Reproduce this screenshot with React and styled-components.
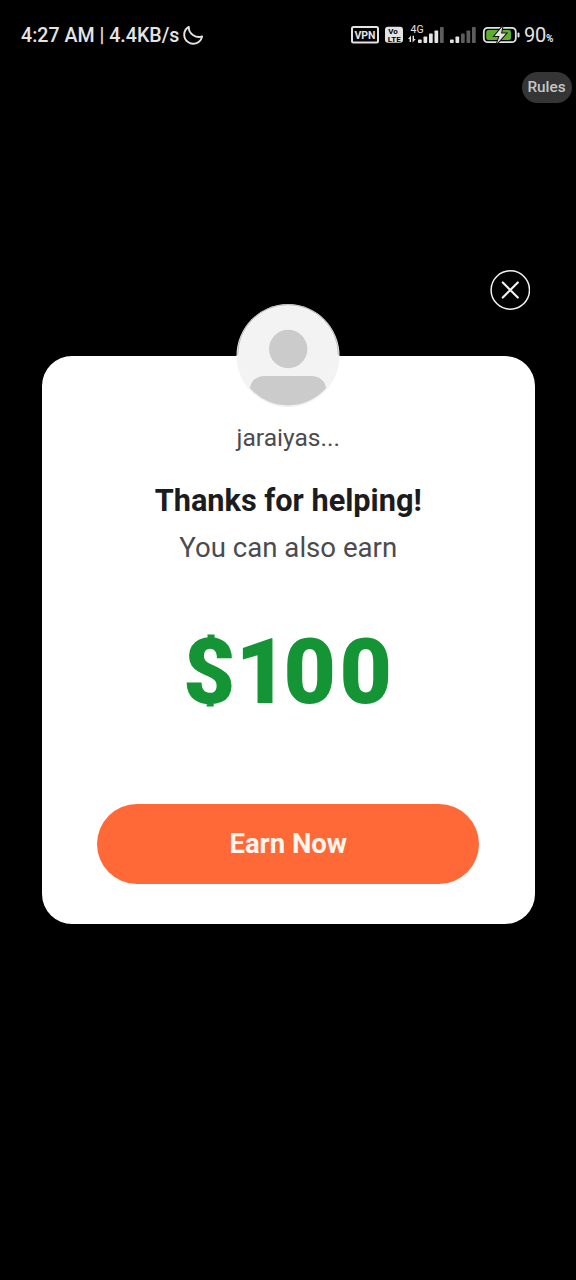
import styled, { createGlobalStyle } from 'styled-components';

const GlobalStyle = createGlobalStyle`
  body {
    margin: 0;
    background: #000;
    font-family: Roboto, sans-serif;
  }
  * {
    box-sizing: border-box;
  }
`;

const Screen = styled.main`
  display: flex;
  flex-direction: column;
  width: 576px;
  height: 1280px;
  overflow: hidden;
  background: #000;
`;

const StatusBar = styled.header`
  display: flex;
  justify-content: space-between;
  height: 72px;
  padding: 24px 20px 0 21px;
  color: #e4e4e4;
`;

const StatusGroup = styled.div`
  display: flex;
  height: 22px;
  align-items: center;
`;

const Clock = styled.span`
  margin-right: 4px;
  padding-top: 1px;
  font-size: 19.6px;
  font-weight: 500;
  line-height: 22px;
`;

const StatusIcons = styled.svg`
  display: block;
  width: 173px;
  height: 24px;
  font-family: Roboto, sans-serif;
`;

const Percent = styled.span`
  width: 32px;
  padding-top: 3px;
  font-size: 20px;
  line-height: 22px;
  letter-spacing: -0.2px;
  white-space: nowrap;
  small {
    font-size: 10px;
    font-weight: 700;
  }
`;

const RulesButton = styled.button`
  align-self: flex-end;
  width: 50px;
  height: 31px;
  margin-right: 4px;
  padding: 0;
  border: 0;
  border-radius: 16px;
  background: #353535;
  color: #c6c6c6;
  font: 500 15.3px/31px Roboto, sans-serif;
  span {
    display: block;
    height: 31px;
    padding-right: 1px;
  }
`;

const CloseButton = styled.button`
  align-self: flex-end;
  width: 40px;
  height: 40px;
  margin: 167px 46px 0 0;
  padding: 0;
  border: 0;
  background: none;
  svg {
    display: block;
  }
`;

const Card = styled.section`
  display: flex;
  flex-direction: column;
  align-items: center;
  width: 493.5px;
  height: 568px;
  margin: 46.4px 0 0 41.5px;
  border-radius: 30px;
  background: #fff;
`;

const Avatar = styled.svg`
  display: block;
  flex: none;
  width: 104px;
  height: 104px;
  margin-top: -52.4px;
`;

const Text = styled.p`
  margin: ${({ $top }) => $top}px 0 0;
  color: ${({ $color }) => $color};
  font-size: ${({ $size }) => $size}px;
  font-weight: ${({ $weight }) => $weight || 400};
  line-height: ${({ $line }) => $line}px;
  white-space: nowrap;
`;

// keeps the strokes above and below the dollar sign short
const Currency = styled.span`
  display: inline-block;
  clip-path: inset(16.5px 0 19.5px 0);
`;

const Digit = styled.span`
  letter-spacing: ${({ $spacing }) => $spacing}px;
`;

const EarnButton = styled.button`
  width: 382px;
  height: 80px;
  margin-top: 78px;
  padding: 0;
  border: 0;
  border-radius: 40px;
  background: #ff6937;
  color: #fff5ee;
  font: 700 27.5px/80px Roboto, sans-serif;
`;

const SignalBars = ({ x, active }) => (
  <g transform={`translate(${x} 0)`}>
    {[3.5, 6.5, 9.5, 12.5, 16].map((height, index) => (
      <rect
        key={height}
        x={index * 5.5}
        y={20 - height}
        width="3.7"
        height={height}
        rx="0.8"
        fill={index < active ? '#e4e4e4' : '#5d5d5d'}
      />
    ))}
  </g>
);

const App = () => (
  <>
    <GlobalStyle />
    <Screen>
      <StatusBar>
        <StatusGroup>
          <Clock>4:27 AM | 4.4KB/s</Clock>
          <svg width="20" height="20" viewBox="0 0 20 20" fill="none">
            <path d="M7 1.4A9 9 0 1 0 18.8 12.6C13 14.2 5.6 8.5 7 1.4Z" stroke="#e4e4e4" strokeWidth="1.9" strokeLinejoin="round" transform="rotate(-8 10 10)" />
          </svg>
        </StatusGroup>
        <StatusGroup>
          <StatusIcons viewBox="0 0 173 24" fill="#e4e4e4">
            <rect x="1" y="4" width="26" height="15.5" rx="1.5" fill="none" stroke="#e4e4e4" strokeWidth="2" />
            <text x="14" y="15.6" fontSize="10.5" fontWeight="700" textAnchor="middle">VPN</text>
            <rect x="34" y="3.8" width="18" height="16" rx="3" />
            <text x="42" y="11.3" fontSize="8" fontWeight="700" textAnchor="middle" fill="#000">Vo</text>
            <text x="43.2" y="18.6" fontSize="8" fontWeight="700" textAnchor="middle" fill="#000">LTE</text>
            <text x="59.5" y="9.5" fontSize="10.5">4G</text>
            <path d="M58.6 19v-3h-1.6l3-3.6v6.6zM61.6 12.8h1.4v3.2h1.8l-3.2 3.6z" />
            <SignalBars x={67} active={4} />
            <SignalBars x={99} active={2} />
            <rect x="132.8" y="4.8" width="32" height="14.4" rx="4" fill="none" stroke="#e4e4e4" strokeWidth="1.8" />
            <rect x="135.2" y="7" width="24.8" height="10" rx="2" fill="#5dae2b" />
            <rect x="166.5" y="9.5" width="2" height="5" rx="1" />
            <path d="M151.5 3.5L143.5 13h5l-2.5 7.5 9-10h-5z" stroke="#111" strokeWidth="2" paintOrder="stroke" />
          </StatusIcons>
          <Percent>
            90
            <small>%</small>
          </Percent>
        </StatusGroup>
      </StatusBar>
      <RulesButton><span>Rules</span></RulesButton>
      <CloseButton aria-label="Close">
        <svg width="40" height="40" viewBox="0 0 40 40" fill="none" stroke="#f2f2f2">
          <circle cx="20.3" cy="20" r="19.2" strokeWidth="1.5" />
          <path d="M12.8 12.5l15 15M27.8 12.5l-15 15" strokeWidth="2.2" strokeLinecap="round" />
        </svg>
      </CloseButton>
      <Card>
        <Avatar viewBox="0 0 104 104">
          <defs>
            <clipPath id="avatar-clip">
              <circle cx="52" cy="50.8" r="50.6" />
            </clipPath>
          </defs>
          <circle cx="52" cy="51.6" r="51.5" fill="#f3f3f3" />
          <path d="M1.6 51a50.4 50.4 0 0 1 100.8 0" fill="none" stroke="#a2a2a2" strokeWidth="0.7" />
          <g clipPath="url(#avatar-clip)" fill="#cbcbcb">
            <circle cx="52.2" cy="45" r="19.2" />
            <path d="M28 72h48q7 0 12 6l2 5v20H14V83l2-5q5-6 12-6z" />
          </g>
        </Avatar>
        <Text $top={16} $size={24.6} $line={28} $color="#4b4b4f">jaraiyas...</Text>
        <Text $top={31} $size={30.7} $line={36} $weight={700} $color="#1c1c1f">Thanks for helping!</Text>
        <Text $top={13} $size={27.6} $line={32} $color="#4b4b4f">You can also earn</Text>
        <Text $top={54} $size={90.5} $line={108} $weight={900} $color="#149434">
          <Currency>$</Currency>
          <Digit $spacing={-4.5}>1</Digit>
          <Digit $spacing={3.5}>0</Digit>
          <Digit $spacing={1.5}>0</Digit>
        </Text>
        <EarnButton>Earn Now</EarnButton>
      </Card>
    </Screen>
  </>
);

export default App;
